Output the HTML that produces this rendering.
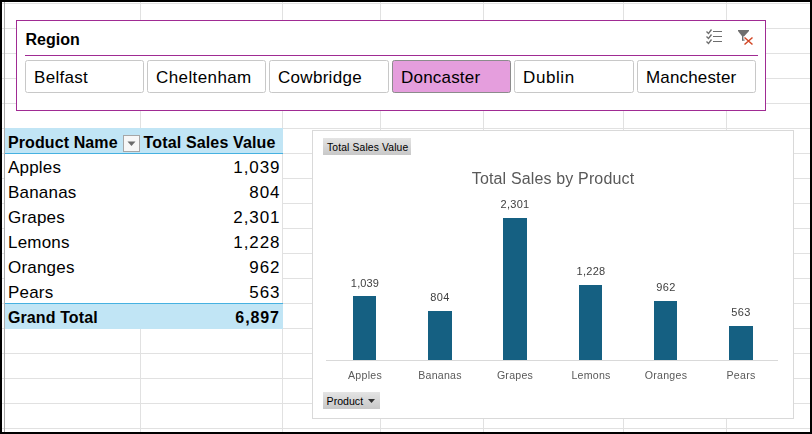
<!DOCTYPE html>
<html><head><meta charset="utf-8"><style>
html,body{margin:0;padding:0;width:812px;height:434px;overflow:hidden;background:#fff;position:relative}
.t{position:absolute;white-space:nowrap;line-height:normal;font-family:"Liberation Sans", sans-serif}
.g{will-change:transform}
.vl{position:absolute;top:0;width:1px;height:434px;background:#e1e1e1}
.hl{position:absolute;left:0;height:1px;width:812px;background:#e1e1e1}
</style></head><body>
<div class="vl" style="left:140px"></div>
<div class="vl" style="left:282px"></div>
<div class="vl" style="left:380px"></div>
<div class="vl" style="left:483px"></div>
<div class="vl" style="left:623px"></div>
<div class="vl" style="left:726px"></div>
<div class="hl" style="top:3px"></div>
<div class="hl" style="top:28px"></div>
<div class="hl" style="top:53px"></div>
<div class="hl" style="top:78px"></div>
<div class="hl" style="top:103px"></div>
<div class="hl" style="top:128px"></div>
<div class="hl" style="top:153px"></div>
<div class="hl" style="top:178px"></div>
<div class="hl" style="top:203px"></div>
<div class="hl" style="top:228px"></div>
<div class="hl" style="top:253px"></div>
<div class="hl" style="top:278px"></div>
<div class="hl" style="top:303px"></div>
<div class="hl" style="top:328px"></div>
<div class="hl" style="top:353px"></div>
<div class="hl" style="top:378px"></div>
<div class="hl" style="top:403px"></div>
<div class="hl" style="top:428px"></div>
<div class="vl" style="left:4px;background:#ababab"></div>
<div style="position:absolute;left:5px;top:154px;width:277px;height:149px;background:#fff"></div>
<div style="position:absolute;left:5px;top:128px;width:278px;height:25px;background:#c1e5f5"></div>
<div style="position:absolute;left:5px;top:153px;width:278px;height:1px;background:#46b1e1"></div>
<div style="position:absolute;left:5px;top:303px;width:278px;height:1px;background:#46b1e1"></div>
<div style="position:absolute;left:5px;top:304px;width:278px;height:25px;background:#c1e5f5"></div>
<div style="position:absolute;left:123px;top:135px;width:15px;height:15px;border:1px solid #a6a6a6;background:#f7f7f7"></div>
<svg style="position:absolute;left:0;top:0" width="812" height="434"><path d="M127.5 141.5 L135.5 141.5 L131.5 146 Z" fill="#6b6b6b"/></svg>
<div class="t" style="left:8px;top:133.52px;font-size:16px;letter-spacing:0.1px;color:#000;font-weight:bold;">Product Name</div>
<div class="t" style="left:143.5px;top:133.52px;font-size:16px;letter-spacing:0.15px;color:#000;font-weight:bold;">Total Sales Value</div>
<div class="t" style="left:8px;top:158.12px;font-size:17px;letter-spacing:0.2px;color:#000;font-weight:normal;">Apples</div>
<div class="t" style="right:531.60px;top:158.12px;font-size:17px;letter-spacing:0.9px;color:#000;font-weight:normal;">1,039</div>
<div class="t" style="left:8px;top:183.12px;font-size:17px;letter-spacing:0.2px;color:#000;font-weight:normal;">Bananas</div>
<div class="t" style="right:531.60px;top:183.12px;font-size:17px;letter-spacing:0.9px;color:#000;font-weight:normal;">804</div>
<div class="t" style="left:8px;top:208.12px;font-size:17px;letter-spacing:0.2px;color:#000;font-weight:normal;">Grapes</div>
<div class="t" style="right:531.60px;top:208.12px;font-size:17px;letter-spacing:0.9px;color:#000;font-weight:normal;">2,301</div>
<div class="t" style="left:8px;top:233.12px;font-size:17px;letter-spacing:0.2px;color:#000;font-weight:normal;">Lemons</div>
<div class="t" style="right:531.60px;top:233.12px;font-size:17px;letter-spacing:0.9px;color:#000;font-weight:normal;">1,228</div>
<div class="t" style="left:8px;top:258.12px;font-size:17px;letter-spacing:0.2px;color:#000;font-weight:normal;">Oranges</div>
<div class="t" style="right:531.60px;top:258.12px;font-size:17px;letter-spacing:0.9px;color:#000;font-weight:normal;">962</div>
<div class="t" style="left:8px;top:283.12px;font-size:17px;letter-spacing:0.2px;color:#000;font-weight:normal;">Pears</div>
<div class="t" style="right:531.60px;top:283.12px;font-size:17px;letter-spacing:0.9px;color:#000;font-weight:normal;">563</div>
<div class="t" style="left:8px;top:308.52px;font-size:16px;letter-spacing:0.1px;color:#000;font-weight:bold;">Grand Total</div>
<div class="t" style="right:532.10px;top:308.52px;font-size:16px;letter-spacing:0.9px;color:#000;font-weight:bold;">6,897</div>
<div style="position:absolute;left:16px;top:20px;width:748px;height:89px;border:1px solid #a02b93;background:#fff"></div>
<div class="t" style="left:25.5px;top:30.52px;font-size:16px;color:#000;font-weight:bold;">Region</div>
<div style="position:absolute;left:25px;top:55px;width:733px;height:1px;background:#a02b93"></div>
<div style="position:absolute;left:25px;top:60px;width:117px;height:31px;border:1px solid #c8c8c8;border-radius:2.5px;background:#fff"></div>
<div class="t" style="left:34px;top:67.61px;font-size:17px;letter-spacing:0.3px;color:#000;font-weight:normal;">Belfast</div>
<div style="position:absolute;left:147px;top:60px;width:117px;height:31px;border:1px solid #c8c8c8;border-radius:2.5px;background:#fff"></div>
<div class="t" style="left:156px;top:67.61px;font-size:17px;letter-spacing:0.4px;color:#000;font-weight:normal;">Cheltenham</div>
<div style="position:absolute;left:269px;top:60px;width:118px;height:31px;border:1px solid #c8c8c8;border-radius:2.5px;background:#fff"></div>
<div class="t" style="left:278px;top:67.61px;font-size:17px;letter-spacing:0.3px;color:#000;font-weight:normal;">Cowbridge</div>
<div style="position:absolute;left:392px;top:60px;width:117px;height:31px;border:1px solid #8c8c8c;border-radius:2.5px;background:#e59edd"></div>
<div class="t" style="left:401px;top:67.61px;font-size:17px;letter-spacing:0.2px;color:#000;font-weight:normal;">Doncaster</div>
<div style="position:absolute;left:514px;top:60px;width:118px;height:31px;border:1px solid #c8c8c8;border-radius:2.5px;background:#fff"></div>
<div class="t" style="left:523px;top:67.61px;font-size:17px;letter-spacing:0.6px;color:#000;font-weight:normal;">Dublin</div>
<div style="position:absolute;left:637px;top:60px;width:117px;height:31px;border:1px solid #c8c8c8;border-radius:2.5px;background:#fff"></div>
<div class="t" style="left:646px;top:67.61px;font-size:17px;letter-spacing:0.15px;color:#000;font-weight:normal;">Manchester</div>
<svg style="position:absolute;left:0;top:0" width="812" height="434">
<g fill="none" stroke="#6e6e6e" stroke-width="1.3">
<path d="M706.5 31.5 L708.5 33.5 L711.5 29.5"/>
<path d="M706.5 36.5 L708.5 38.5 L711.5 34.5"/>
<path d="M706.5 41.5 L708.5 43.5 L711.5 39.5"/>
</g>
<g fill="none" stroke="#6e6e6e" stroke-width="1">
<path d="M713 31.5 H722 M713 36.5 H722 M713 41.5 H722"/>
</g>
<path d="M738 30 H749 V31 L744.2 36.2 H742 L738 31 Z" fill="#6e6e6e"/>
<rect x="742" y="36" width="1.4" height="4.6" fill="#6e6e6e"/>
<rect x="742" y="39.6" width="2.7" height="1" fill="#6e6e6e"/>
<g stroke="#d24726" stroke-width="1.5" fill="none">
<path d="M744.5 37.5 L752.5 44.5 M744.5 44.5 L752.5 37.5"/>
</g>
</svg>
<div style="position:absolute;left:312px;top:130px;width:480px;height:287px;border:1px solid #d9d9d9;background:#fff"></div>
<div style="position:absolute;left:323px;top:138px;width:88px;height:17px;background:linear-gradient(#e4e4e4,#c8c8c8)"></div>
<div class="t" style="left:327px;top:142.08px;font-size:10.3px;letter-spacing:0.15px;color:#000;font-weight:normal;">Total Sales Value</div>
<div class="t g" style="left:352.87px;width:400px;text-align:center;top:169.52px;font-size:16px;letter-spacing:0.15px;color:#595959;font-weight:normal;">Total Sales by Product</div>
<div style="position:absolute;left:353px;top:296px;width:23px;height:64px;background:#156082"></div>
<div class="t g" style="left:165.07px;width:400px;text-align:center;top:277.05px;font-size:11px;letter-spacing:0.15px;color:#404040;font-weight:normal;">1,039</div>
<div class="t g" style="left:164.62px;width:400px;text-align:center;top:369.41px;font-size:10.6px;letter-spacing:0.25px;color:#595959;font-weight:normal;">Apples</div>
<div style="position:absolute;left:428px;top:311px;width:24px;height:49px;background:#156082"></div>
<div class="t g" style="left:240.15px;width:400px;text-align:center;top:291.05px;font-size:11px;letter-spacing:0.3px;color:#404040;font-weight:normal;">804</div>
<div class="t g" style="left:240.12px;width:400px;text-align:center;top:369.41px;font-size:10.6px;letter-spacing:0.25px;color:#595959;font-weight:normal;">Bananas</div>
<div style="position:absolute;left:503px;top:218px;width:24px;height:142px;background:#156082"></div>
<div class="t g" style="left:315.15px;width:400px;text-align:center;top:198.04px;font-size:11px;letter-spacing:0.3px;color:#404040;font-weight:normal;">2,301</div>
<div class="t g" style="left:315.12px;width:400px;text-align:center;top:369.41px;font-size:10.6px;letter-spacing:0.25px;color:#595959;font-weight:normal;">Grapes</div>
<div style="position:absolute;left:579px;top:285px;width:23px;height:75px;background:#156082"></div>
<div class="t g" style="left:390.65px;width:400px;text-align:center;top:265.05px;font-size:11px;letter-spacing:0.3px;color:#404040;font-weight:normal;">1,228</div>
<div class="t g" style="left:390.62px;width:400px;text-align:center;top:369.41px;font-size:10.6px;letter-spacing:0.25px;color:#595959;font-weight:normal;">Lemons</div>
<div style="position:absolute;left:654px;top:301px;width:23px;height:59px;background:#156082"></div>
<div class="t g" style="left:465.65px;width:400px;text-align:center;top:281.05px;font-size:11px;letter-spacing:0.3px;color:#404040;font-weight:normal;">962</div>
<div class="t g" style="left:465.62px;width:400px;text-align:center;top:369.41px;font-size:10.6px;letter-spacing:0.25px;color:#595959;font-weight:normal;">Oranges</div>
<div style="position:absolute;left:729px;top:326px;width:24px;height:34px;background:#156082"></div>
<div class="t g" style="left:541.15px;width:400px;text-align:center;top:306.05px;font-size:11px;letter-spacing:0.3px;color:#404040;font-weight:normal;">563</div>
<div class="t g" style="left:541.12px;width:400px;text-align:center;top:369.41px;font-size:10.6px;letter-spacing:0.25px;color:#595959;font-weight:normal;">Pears</div>
<div style="position:absolute;left:326px;top:360px;width:452px;height:1px;background:#d9d9d9"></div>
<div style="position:absolute;left:323px;top:392px;width:57px;height:17px;background:linear-gradient(#e4e4e4,#c8c8c8)"></div>
<div class="t" style="left:326.6px;top:394.91px;font-size:10.6px;color:#000;font-weight:normal;">Product</div>
<svg style="position:absolute;left:0;top:0" width="812" height="434"><path d="M368 399 L375 399 L371.5 403 Z" fill="#303030"/></svg>
<div style="position:absolute;left:0;top:0;width:808px;height:430px;border:2px solid #000"></div>
</body></html>
